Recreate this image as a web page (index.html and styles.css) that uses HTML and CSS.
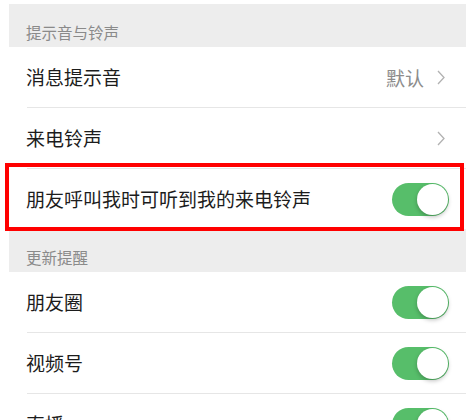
FILE: index.html
```html
<!DOCTYPE html>
<html lang="zh-CN">
<head>
<meta charset="utf-8">
<title>消息通知</title>
<link rel="stylesheet" href="styles.css">
</head>
<body>
<div class="page">
  <div class="section-title">提示音与铃声</div>
  <div class="group">
    <div class="cell">
      <span class="label">消息提示音</span>
      <span class="value">默认</span>
      <svg class="chevron" viewBox="0 0 8 15" width="8" height="15"><path d="M1 1 L7 7.5 L1 14" fill="none" stroke="#b2b2b2" stroke-width="1.3"/></svg>
    </div>
    <div class="cell">
      <span class="label">来电铃声</span>
      <svg class="chevron" viewBox="0 0 8 15" width="8" height="15"><path d="M1 1 L7 7.5 L1 14" fill="none" stroke="#b2b2b2" stroke-width="1.3"/></svg>
    </div>
    <div class="cell highlighted">
      <span class="label">朋友呼叫我时可听到我的来电铃声</span>
      <span class="switch"><span class="knob"></span></span>
      <span class="highlight-box"></span>
    </div>
  </div>
  <div class="section-title">更新提醒</div>
  <div class="group">
    <div class="cell">
      <span class="label">朋友圈</span>
      <span class="switch"><span class="knob"></span></span>
    </div>
    <div class="cell">
      <span class="label">视频号</span>
      <span class="switch"><span class="knob"></span></span>
    </div>
    <div class="cell">
      <span class="label">直播</span>
      <span class="switch"><span class="knob"></span></span>
    </div>
  </div>
</div>
</body>
</html>
```
FILE: styles.css
```css
html, body {
  margin: 0;
  padding: 0;
  background: #ffffff;
  height: 420px;
  overflow: hidden;
}
body {
  font-family: "Noto Sans CJK SC", "Noto Sans", sans-serif;
}
.page {
  margin: 4px 0 0 9px;
  width: 457px;
}
.section-title {
  height: 43px;
  box-sizing: border-box;
  padding: 19px 0 0 17px;
  background: #ededed;
  color: #8a8a8a;
  font-size: 15.5px;
  line-height: 18px;
}
.group {
  background: #ffffff;
}
.cell {
  position: relative;
  display: flex;
  align-items: center;
  height: 60px;
  padding: 0 17px 0 17px;
  box-sizing: border-box;
}
.cell + .cell {
  height: 61px;
  border-top: 1px solid transparent;
}
.cell + .cell::before {
  content: "";
  position: absolute;
  top: -1px;
  left: 18px;
  right: 0;
  height: 1px;
  background: #e6e6e6;
}
.label {
  flex: 1;
  font-size: 19px;
  color: #1c1c1c;
  line-height: 24px;
}
.value {
  font-size: 19px;
  color: #8c8c8c;
  margin-right: 13px;
}
.chevron {
  margin-right: 4px;
  display: block;
}
.switch {
  position: relative;
  width: 57px;
  height: 33px;
  border-radius: 17px;
  background: #57be6a;
  flex: none;
}
.knob {
  position: absolute;
  top: 1px;
  right: 1px;
  width: 31px;
  height: 31px;
  border-radius: 50%;
  background: #ffffff;
  box-shadow: 0 2px 4px rgba(0, 0, 0, 0.25);
}
.highlight-box {
  position: absolute;
  left: -4px;
  top: -6px;
  width: 459px;
  height: 68px;
  box-sizing: border-box;
  border: 4px solid #ff0000;
  pointer-events: none;
}
```
